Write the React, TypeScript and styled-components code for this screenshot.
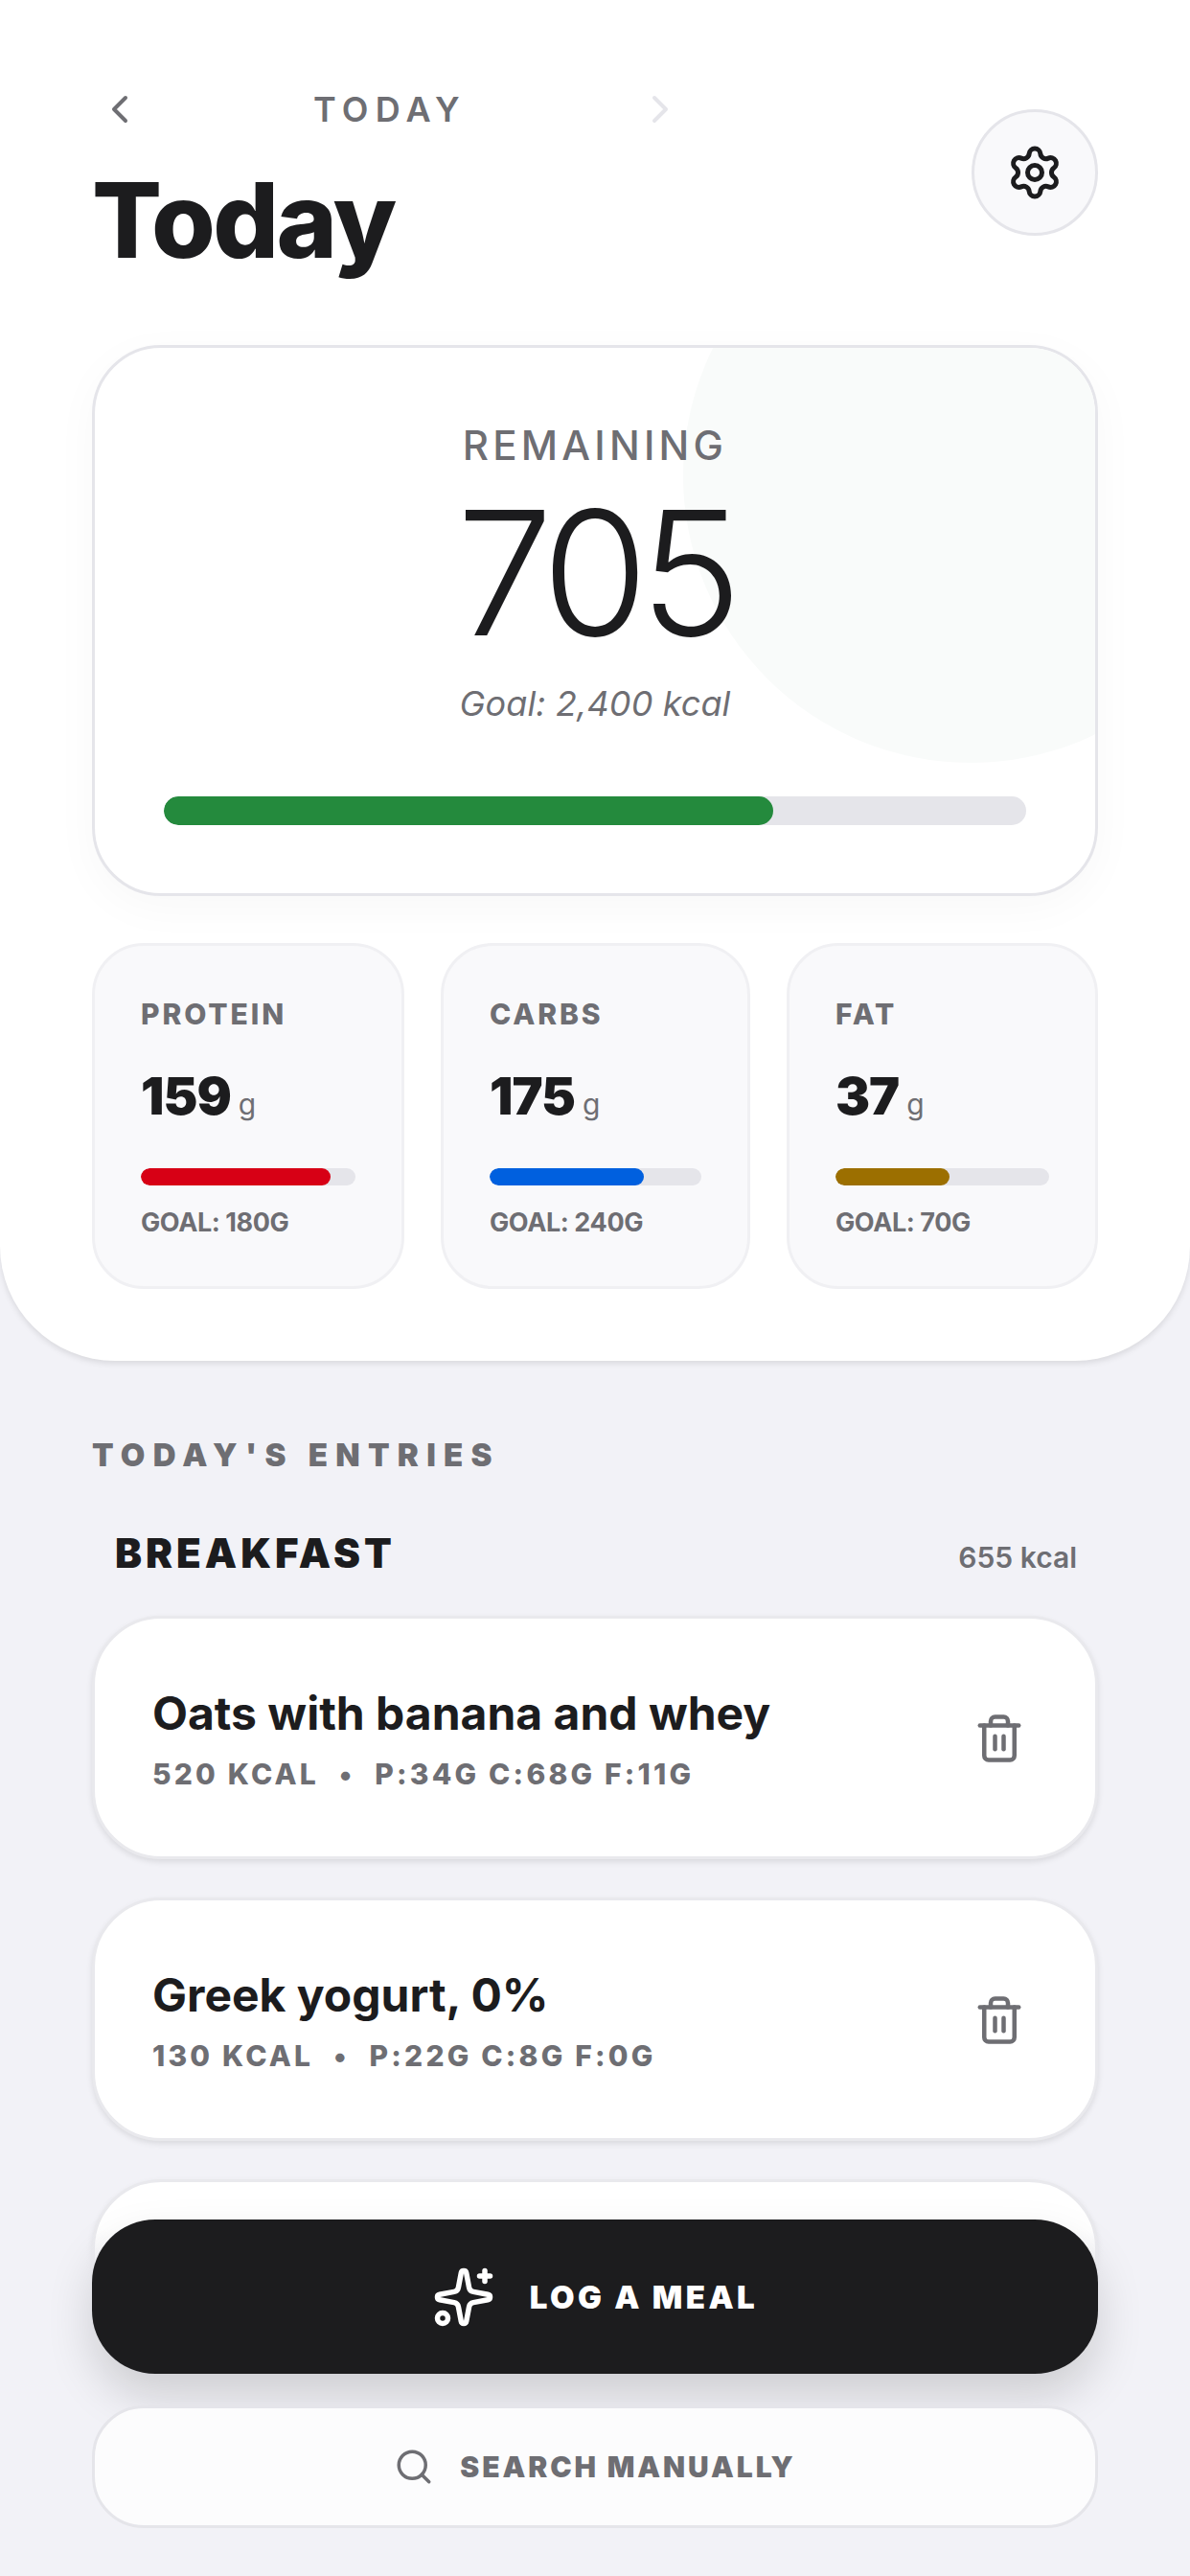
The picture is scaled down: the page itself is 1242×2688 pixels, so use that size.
import styled, { createGlobalStyle } from 'styled-components'
import { ChevronLeft, ChevronRight, Search, Settings, Sparkles, Trash2 } from 'lucide-react'

const GlobalStyle = createGlobalStyle`
    html, body {
        margin: 0;
        padding: 0;
        background: #f2f2f7;
    }
    * {
        box-sizing: border-box;
    }
`

const SPage = styled.div`
    position: relative;
    width: 1242px;
    height: 2688px;
    overflow: hidden;
    background: #f2f2f7;
    font-family: Inter, 'Noto Sans', sans-serif;
    color: #1c1c1e;
`

const SSheet = styled.section`
    height: 1420px;
    padding: 84px 96px 0;
    background: #fff;
    border-radius: 0 0 120px 120px;
    box-shadow: 0 3px 6px rgba(0, 0, 0, 0.1);
`

const SHeader = styled.header`
    display: flex;
    justify-content: space-between;
    height: 276px;
`

const SDateNav = styled.div`
    display: flex;
    align-items: center;
    justify-content: space-between;
    width: 612px;
    height: 60px;
    margin-left: 5px;
    color: #6e6e73;
    .next {
        color: #e5e5ea;
    }
`

const SDateLabel = styled.span`
    font-size: 36px;
    font-weight: 600;
    letter-spacing: 7.2px;
`

const STitle = styled.h1`
    margin: 21px 0 0;
    font-size: 108px;
    line-height: 130px;
    font-weight: 800;
    letter-spacing: -2.6px;
`

const SGearButton = styled.button`
    display: flex;
    align-items: center;
    justify-content: center;
    width: 132px;
    height: 132px;
    margin-top: 30px;
    padding: 0;
    color: #1c1c1e;
    background: #f9f9fb;
    border: 3px solid #e5e5ea;
    border-radius: 50%;
`

const SHero = styled.div`
    position: relative;
    display: flex;
    flex-direction: column;
    align-items: center;
    height: 575px;
    padding: 78px 72px 0;
    overflow: hidden;
    background: #fff;
    border: 3px solid #e5e5ea;
    border-radius: 72px;
    box-shadow: 0 12px 48px rgba(0, 0, 0, 0.03);
    &::before {
        content: '';
        position: absolute;
        top: -167px;
        right: -170px;
        width: 600px;
        height: 600px;
        background: #f9fbfa;
        border-radius: 50%;
    }
`

const SHeroLabel = styled.span`
    position: relative;
    font-size: 42px;
    line-height: 48px;
    font-weight: 500;
    letter-spacing: 4.2px;
    color: #6e6e73;
`

const SHeroValue = styled.span`
    position: relative;
    margin-top: 14px;
    font-size: 180px;
    line-height: 190px;
    font-weight: 300;
    letter-spacing: -9px;
`

const SHeroGoal = styled.span`
    position: relative;
    margin-top: 17px;
    font-size: 36px;
    line-height: 48px;
    font-style: italic;
    letter-spacing: 0.1px;
    color: #6e6e73;
`

const STrack = styled.div<{ $height: number }>`
    position: relative;
    flex-shrink: 0;
    width: 100%;
    height: ${({ $height }) => $height}px;
    overflow: hidden;
    background: #e5e5ea;
    border-radius: ${({ $height }) => $height / 2}px;
`

const SFill = styled.div<{ $color: string }>`
    height: 100%;
    background: ${({ $color }) => $color};
    border-radius: inherit;
`

const SHeroTrack = styled.div`
    width: 100%;
    margin-top: 73px;
`

const SMacros = styled.div`
    display: grid;
    grid-template-columns: 326px 323px 325px;
    gap: 38px;
    justify-content: space-between;
    margin-top: 49px;
`

const SMacroCard = styled.div`
    height: 361px;
    padding: 51px 48px 0;
    background: #f9f9fb;
    border: 3px solid #f0f0f3;
    border-radius: 54px;
`

const SMacroName = styled.div`
    font-size: 30px;
    line-height: 40px;
    font-weight: 800;
    letter-spacing: 2.9px;
    color: #6e6e73;
`

const SMacroValue = styled.div`
    display: flex;
    align-items: baseline;
    gap: 8px;
    margin-top: 31px;
    height: 70px;
    font-size: 54px;
    line-height: 70px;
    font-weight: 900;
    letter-spacing: -1px;
    span {
        font-size: 30px;
        font-weight: 400;
        letter-spacing: 0;
        color: #6e6e73;
    }
`

const SMacroTrack = styled.div`
    margin-top: 40px;
`

const SMacroGoal = styled.div`
    margin-top: 21px;
    font-size: 27px;
    line-height: 36px;
    font-weight: 700;
    letter-spacing: -0.4px;
    color: #6e6e73;
`

const SEntries = styled.section`
    padding: 78px 96px 0;
`

const SEntriesTitle = styled.h2`
    margin: 0;
    font-size: 33px;
    line-height: 40px;
    font-weight: 900;
    letter-spacing: 8.3px;
    color: #6e6e73;
`

const SMealHeader = styled.div`
    display: flex;
    align-items: baseline;
    justify-content: space-between;
    height: 60px;
    margin-top: 57px;
    padding: 0 22px 0 24px;
`

const SMealName = styled.span`
    font-size: 42px;
    font-weight: 900;
    letter-spacing: 4px;
`

const SMealTotal = styled.span`
    font-size: 30px;
    font-weight: 600;
    color: #6e6e73;
`

const SEntryList = styled.div`
    display: flex;
    flex-direction: column;
    gap: 40px;
    margin-top: 31px;
`

const SEntryCard = styled.div`
    display: flex;
    align-items: center;
    justify-content: space-between;
    height: 254px;
    padding: 0 73px 0 60px;
    background: #fff;
    border: 3px solid #e9e9ed;
    border-radius: 72px;
    box-shadow: 0 3px 6px rgba(0, 0, 0, 0.1);
`

const SEntryName = styled.div`
    font-size: 48px;
    line-height: 60px;
    font-weight: 700;
`

const SEntryMeta = styled.div`
    display: flex;
    gap: 21px;
    margin-top: 15px;
    font-size: 30px;
    line-height: 36px;
    font-weight: 800;
    letter-spacing: 3.2px;
    color: #6e6e73;
`

const STrash = styled.span`
    display: flex;
    margin-top: 2px;
    color: #6e6e73;
`

const SFooter = styled.div`
    position: absolute;
    left: 0;
    right: 0;
    bottom: 0;
    display: flex;
    flex-direction: column;
    gap: 33px;
    padding: 0 96px 50px;
    background: linear-gradient(to bottom, rgba(242, 242, 247, 0) 10px, #f2f2f7 60px);
`

const SLogButton = styled.button`
    display: flex;
    align-items: center;
    justify-content: center;
    gap: 36px;
    height: 161px;
    color: #fff;
    font-family: inherit;
    font-size: 33px;
    font-weight: 900;
    letter-spacing: 3.4px;
    background: #1c1c1e;
    border: 0;
    border-radius: 66px;
    box-shadow: 0 24px 48px rgba(0, 0, 0, 0.15);
`

const SSearchButton = styled.button`
    display: flex;
    align-items: center;
    justify-content: center;
    gap: 27px;
    height: 128px;
    color: #6e6e73;
    font-family: inherit;
    font-size: 30px;
    font-weight: 900;
    letter-spacing: 2.9px;
    background: #fcfcfd;
    border: 3px solid #e5e5ea;
    border-radius: 54px;
`

const macros = [
    { name: 'PROTEIN', value: 159, goal: 'GOAL: 180G', pct: 88.5, color: '#d70015' },
    { name: 'CARBS', value: 175, goal: 'GOAL: 240G', pct: 73, color: '#0060df' },
    { name: 'FAT', value: 37, goal: 'GOAL: 70G', pct: 53.5, color: '#9c6f00' },
]

const entries = [
    { name: 'Oats with banana and whey', kcal: '520 KCAL', detail: 'P:34G C:68G F:11G' },
    { name: 'Greek yogurt, 0%', kcal: '130 KCAL', detail: 'P:22G C:8G F:0G' },
]

function App() {
    return (
        <SPage>
            <GlobalStyle />
            <SSheet>
                <SHeader>
                    <div>
                        <SDateNav>
                            <ChevronLeft size={48} strokeWidth={2} />
                            <SDateLabel>TODAY</SDateLabel>
                            <ChevronRight className="next" size={48} strokeWidth={2} />
                        </SDateNav>
                        <STitle>Today</STitle>
                    </div>
                    <SGearButton>
                        <Settings size={60} strokeWidth={2} />
                    </SGearButton>
                </SHeader>

                <SHero>
                    <SHeroLabel>REMAINING</SHeroLabel>
                    <SHeroValue>705</SHeroValue>
                    <SHeroGoal>Goal: 2,400 kcal</SHeroGoal>
                    <SHeroTrack>
                        <STrack $height={30}>
                            <SFill $color="#248a3d" style={{ width: '70.7%' }} />
                        </STrack>
                    </SHeroTrack>
                </SHero>

                <SMacros>
                    {macros.map((m) => (
                        <SMacroCard key={m.name}>
                            <SMacroName>{m.name}</SMacroName>
                            <SMacroValue>
                                {m.value}
                                <span>g</span>
                            </SMacroValue>
                            <SMacroTrack>
                                <STrack $height={18}>
                                    <SFill $color={m.color} style={{ width: `${m.pct}%` }} />
                                </STrack>
                            </SMacroTrack>
                            <SMacroGoal>{m.goal}</SMacroGoal>
                        </SMacroCard>
                    ))}
                </SMacros>
            </SSheet>

            <SEntries>
                <SEntriesTitle>TODAY'S ENTRIES</SEntriesTitle>
                <SMealHeader>
                    <SMealName>BREAKFAST</SMealName>
                    <SMealTotal>655 kcal</SMealTotal>
                </SMealHeader>
                <SEntryList>
                    {entries.map((e) => (
                        <SEntryCard key={e.name}>
                            <div>
                                <SEntryName>{e.name}</SEntryName>
                                <SEntryMeta>
                                    <span>{e.kcal}</span>
                                    <span>•</span>
                                    <span>{e.detail}</span>
                                </SEntryMeta>
                            </div>
                            <STrash>
                                <Trash2 size={54} strokeWidth={2} />
                            </STrash>
                        </SEntryCard>
                    ))}
                    <SEntryCard />
                </SEntryList>
            </SEntries>

            <SFooter>
                <SLogButton>
                    <Sparkles size={66} strokeWidth={2} />
                    LOG A MEAL
                </SLogButton>
                <SSearchButton>
                    <Search size={42} strokeWidth={2} />
                    SEARCH MANUALLY
                </SSearchButton>
            </SFooter>
        </SPage>
    )
}

export default App
